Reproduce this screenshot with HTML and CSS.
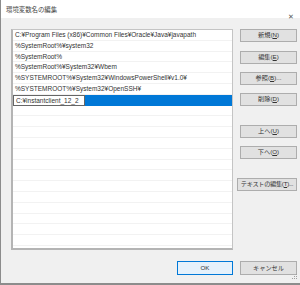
FILE: index.html
```html
<!DOCTYPE html>
<html lang="ja">
<head>
  <meta charset="UTF-8" />
  <title>環境変数名の編集</title>
  <link rel="stylesheet" href="styles.css">
</head>
<body>
  <div class="window">
    <div class="titlebar">
      <span class="title">環境変数名の編集</span>
      <span class="close">✕</span>
    </div>

    <div class="content">
      <div class="main">
        <div class="list">
          <div class="row">C:¥Program Files (x86)¥Common Files¥Oracle¥Java¥javapath</div>
          <div class="row">%SystemRoot%¥system32</div>
          <div class="row">%SystemRoot%</div>
          <div class="row">%SystemRoot%¥System32¥Wbem</div>
          <div class="row">%SYSTEMROOT%¥System32¥WindowsPowerShell¥v1.0¥</div>
          <div class="row">%SYSTEMROOT%¥System32¥OpenSSH¥</div>
          <div class="row selected"><span class="edit">C:¥instantclient_12_2</span></div>
          <div class="row"></div>
          <div class="row"></div>
          <div class="row"></div>
          <div class="row"></div>
          <div class="row"></div>
          <div class="row"></div>
          <div class="row"></div>
          <div class="row"></div>
          <div class="row"></div>
          <div class="row"></div>
          <div class="row"></div>
          <div class="row"></div>
          <div class="row"></div>
        </div>

        <div class="side">
          <button class="btn">新規(<u>N</u>)</button>
          <button class="btn gap-a">編集(<u>E</u>)</button>
          <button class="btn gap-b">参照(<u>B</u>)...</button>
          <button class="btn gap-b">削除(<u>D</u>)</button>
          <button class="btn gap-c">上へ(<u>U</u>)</button>
          <button class="btn gap-b">下へ(<u>O</u>)</button>
          <button class="btn gap-c wide">テキストの編集(<u>T</u>)...</button>
        </div>
      </div>

      <div class="footer">
        <button class="btn ok">OK</button>
        <button class="btn">キャンセル</button>
      </div>
    </div>

    <svg class="grip" width="8" height="8" viewBox="0 0 8 8">
      <rect x="6" y="0" width="1" height="1" fill="#a0a0a0"/>
      <rect x="4" y="2" width="1" height="1" fill="#a0a0a0"/>
      <rect x="6" y="2" width="1" height="1" fill="#a0a0a0"/>
      <rect x="2" y="4" width="1" height="1" fill="#a0a0a0"/>
      <rect x="4" y="4" width="1" height="1" fill="#a0a0a0"/>
      <rect x="6" y="4" width="1" height="1" fill="#a0a0a0"/>
    </svg>
  </div>
</body>
</html>
```

FILE: styles.css
```css
* {
  box-sizing: border-box;
  margin: 0;
  padding: 0;
}

body {
  font-family: 'Liberation Sans', 'Noto Sans CJK JP', sans-serif;
  font-size: 6.5px;
  color: #333;
  background: #f0f0f0;
}

.window {
  position: relative;
  width: 300px;
  height: 285px;
  background: #f0f0f0;
  border-left: 1px solid #8c8c8c;
  border-bottom: 2px solid #8c8c8c;
}

.titlebar {
  height: 18px;
  background: #ffffff;
  display: flex;
  justify-content: space-between;
  align-items: flex-start;
}

.title {
  font-family: 'Noto Sans CJK JP', sans-serif;
  font-size: 6.4px;
  color: #444;
  padding: 5px 0 0 5px;
}

.close {
  font-size: 7px;
  color: #555;
  padding: 13px 6px 0 0;
  line-height: 1;
}

.content {
  padding: 11px 3px 0 10px;
}

.main {
  display: flex;
  align-items: flex-start;
}

.list {
  width: 222px;
  height: 221px;
  background: #ffffff;
  border-top: 1px solid #c4c4c4;
  border-right: 1px solid #c4c4c4;
  border-left: 2px solid #b4b4b4;
  border-bottom: 2px solid #b4b4b4;
  overflow: hidden;
}

.row {
  height: 10.8px;
  line-height: 10px;
  padding-left: 2px;
  border-bottom: 1px solid #f2f2f2;
  white-space: nowrap;
}

.row.selected {
  background: #0078d7;
  padding-left: 0;
  border-bottom-color: #0078d7;
}

.edit {
  display: inline-block;
  width: 72px;
  height: 10.8px;
  padding-left: 2px;
  background: #ffffff;
  border: 1px solid #666;
  line-height: 9px;
}

.side {
  display: flex;
  flex-direction: column;
  margin-left: 7px;
  width: 57px;
}

.btn {
  height: 13px;
  width: 57px;
  background: #e1e1e1;
  border: 1px solid #adadad;
  font-family: 'Liberation Sans', 'Noto Sans CJK JP', sans-serif;
  font-size: 6.2px;
  color: #333;
  white-space: nowrap;
  line-height: 1;
}

.gap-a {
  margin-top: 9px;
}

.gap-b {
  margin-top: 8px;
}

.gap-c {
  margin-top: 19px;
}

.wide {
  width: 60px;
  margin-left: -3px;
  letter-spacing: -0.3px;
}

.footer {
  display: flex;
  justify-content: flex-end;
  gap: 7px;
  padding-top: 11px;
}

.footer .btn {
  height: 14px;
}

.ok {
  width: 56px;
  background: #e5f1fb;
  border-color: #0078d7;
}

.grip {
  position: absolute;
  right: 2px;
  bottom: 1px;
}
```
